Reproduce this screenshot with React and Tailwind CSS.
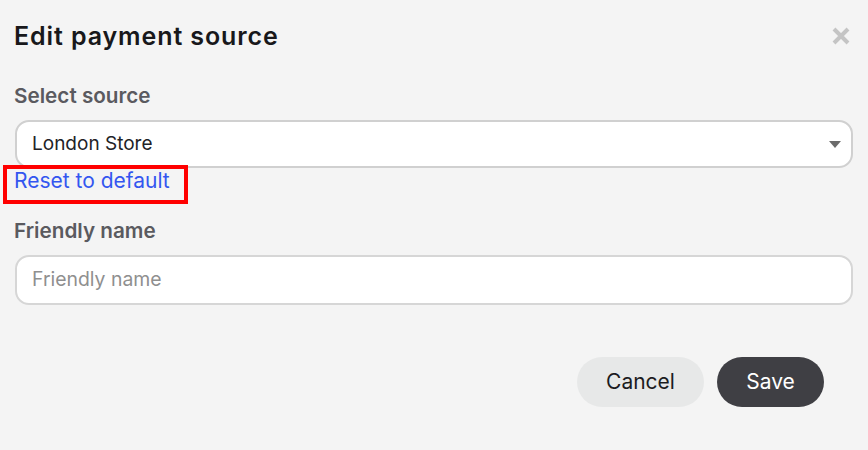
import React from "react";

export default function App() {
  return (
    <div className="w-[868px] h-[450px] bg-[#f4f4f4] font-['Inter',sans-serif] overflow-hidden">
      <div className="flex items-start justify-between pl-[14px] pr-[18px] pt-[20px]">
        <h1 className="text-[25px] leading-[32px] font-semibold tracking-[0.9px] text-[#18181b]">Edit payment source</h1>
        <button className="mt-[7px]" aria-label="Close">
          <svg width="18" height="18" viewBox="0 0 18 18">
            <path d="M2 2 L16 16 M16 2 L2 16" stroke="#c4c4c4" strokeWidth="4" strokeLinecap="butt" />
          </svg>
        </button>
      </div>

      <div className="flex flex-col px-[15px] pt-[30px]">
        <label className="text-[20.7px] leading-[28px] font-semibold text-[#5a5a5f] -ml-px">Select source</label>
        <div className="mt-[10px] h-[48px] rounded-[14px] border-2 border-[#d0d0d0] bg-white flex items-center justify-between pl-[15px] pr-[10px]">
          <span className="text-[19px] text-[#222226]">London Store</span>
          <svg width="12" height="7" viewBox="0 0 12 7">
            <path d="M0 0 H12 L6 7 Z" fill="#6b6b6b" />
          </svg>
        </div>
        <div className="flex mt-[1px]">
          <a className="-ml-[8px] pl-[7px] pr-[14px] pb-[7px] text-[21px] leading-[24px] text-[#3356f0] outline-[4.5px] outline-solid outline-[#ff0000]">Reset to default</a>
        </div>

        <label className="mt-[17px] text-[20.7px] leading-[28px] font-semibold text-[#5a5a5f] -ml-px">Friendly name</label>
        <div className="mt-[10px] h-[50px] rounded-[14px] border-2 border-[#d6d6d6] bg-white flex items-center pl-[15px]">
          <input
            className="w-full bg-transparent outline-none text-[19.4px] text-[#222] placeholder:text-[#8f8f8f]"
            placeholder="Friendly name"
          />
        </div>

        <div className="flex justify-end gap-[13px] mt-[52px] pr-[29px]">
          <button className="h-[50px] w-[127px] rounded-full bg-[#e7e8e8] text-[21px] text-[#1c1c1f]">Cancel</button>
          <button className="h-[50px] w-[107px] rounded-full bg-[#3f3f44] text-[21px] text-white">Save</button>
        </div>
      </div>
    </div>
  );
}
